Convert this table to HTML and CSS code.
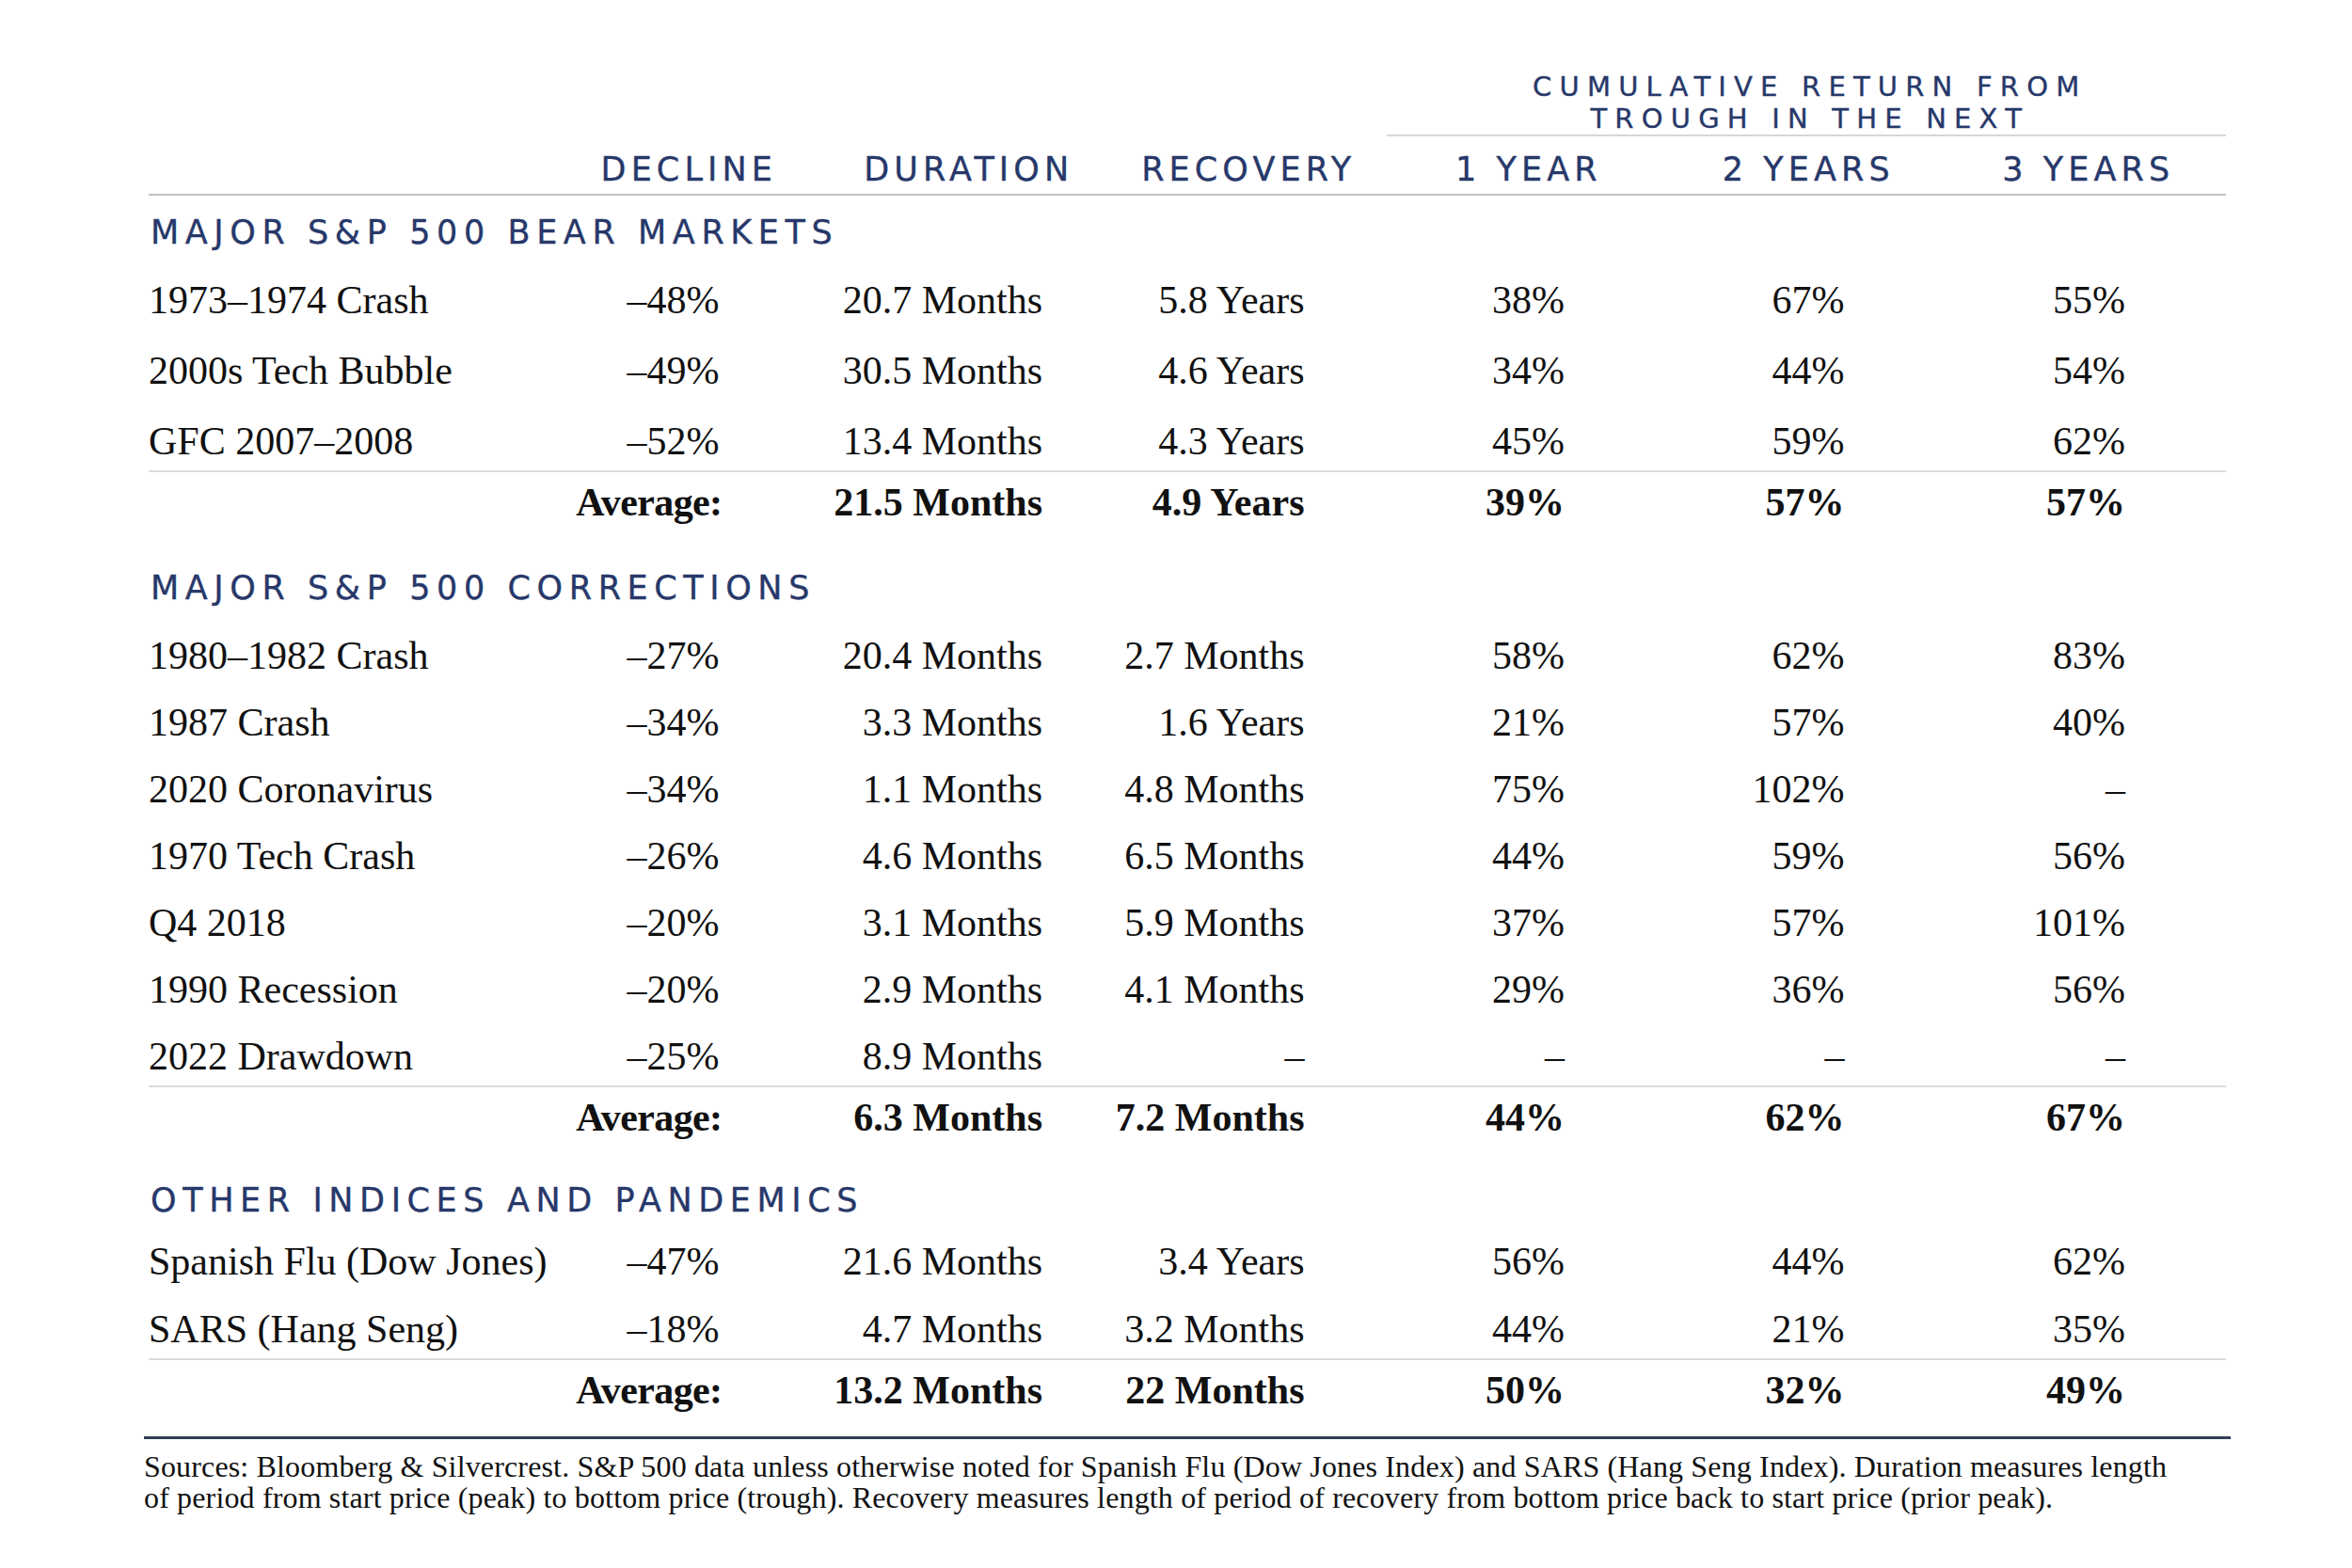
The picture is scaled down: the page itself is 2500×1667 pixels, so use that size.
FILE: index.html
```html
<!DOCTYPE html>
<html lang="en">
<head>
<meta charset="utf-8">
<title>Bear markets and corrections</title>
<link rel="stylesheet" href="styles.css">
</head>
<body>
<main class="page">
  <div class="table">
    <div class="grid head-group">
      <div class="group-label"><span class="gl-line">CUMULATIVE RETURN FROM</span><span class="gl-line">TROUGH IN THE NEXT</span></div>
    </div>
    <div class="grid head-cols">
      <div class="hc hc1">DECLINE</div>
      <div class="hc">DURATION</div>
      <div class="hc">RECOVERY</div>
      <div class="hc">1 YEAR</div>
      <div class="hc">2 YEARS</div>
      <div class="hc">3 YEARS</div>
    </div>

    <section class="block block-bear">
      <h2 class="block-title">MAJOR S&amp;P 500 BEAR MARKETS</h2>
      <div class="rows">
        <div class="grid row"><span class="label">1973–1974 Crash</span><span class="v c1">–48%</span><span class="v c2">20.7 Months</span><span class="v c3">5.8 Years</span><span class="v c4">38%</span><span class="v c5">67%</span><span class="v c6">55%</span></div>
        <div class="grid row"><span class="label">2000s Tech Bubble</span><span class="v c1">–49%</span><span class="v c2">30.5 Months</span><span class="v c3">4.6 Years</span><span class="v c4">34%</span><span class="v c5">44%</span><span class="v c6">54%</span></div>
        <div class="grid row"><span class="label">GFC 2007–2008</span><span class="v c1">–52%</span><span class="v c2">13.4 Months</span><span class="v c3">4.3 Years</span><span class="v c4">45%</span><span class="v c5">59%</span><span class="v c6">62%</span></div>
      </div>
      <div class="grid row avg"><span class="v avg-label">Average:</span><span class="v c2">21.5 Months</span><span class="v c3">4.9 Years</span><span class="v c4">39%</span><span class="v c5">57%</span><span class="v c6">57%</span></div>
    </section>

    <section class="block block-corr">
      <h2 class="block-title">MAJOR S&amp;P 500 CORRECTIONS</h2>
      <div class="rows">
        <div class="grid row"><span class="label">1980–1982 Crash</span><span class="v c1">–27%</span><span class="v c2">20.4 Months</span><span class="v c3">2.7 Months</span><span class="v c4">58%</span><span class="v c5">62%</span><span class="v c6">83%</span></div>
        <div class="grid row"><span class="label">1987 Crash</span><span class="v c1">–34%</span><span class="v c2">3.3 Months</span><span class="v c3">1.6 Years</span><span class="v c4">21%</span><span class="v c5">57%</span><span class="v c6">40%</span></div>
        <div class="grid row"><span class="label">2020 Coronavirus</span><span class="v c1">–34%</span><span class="v c2">1.1 Months</span><span class="v c3">4.8 Months</span><span class="v c4">75%</span><span class="v c5">102%</span><span class="v c6">–</span></div>
        <div class="grid row"><span class="label">1970 Tech Crash</span><span class="v c1">–26%</span><span class="v c2">4.6 Months</span><span class="v c3">6.5 Months</span><span class="v c4">44%</span><span class="v c5">59%</span><span class="v c6">56%</span></div>
        <div class="grid row"><span class="label">Q4 2018</span><span class="v c1">–20%</span><span class="v c2">3.1 Months</span><span class="v c3">5.9 Months</span><span class="v c4">37%</span><span class="v c5">57%</span><span class="v c6">101%</span></div>
        <div class="grid row"><span class="label">1990 Recession</span><span class="v c1">–20%</span><span class="v c2">2.9 Months</span><span class="v c3">4.1 Months</span><span class="v c4">29%</span><span class="v c5">36%</span><span class="v c6">56%</span></div>
        <div class="grid row"><span class="label">2022 Drawdown</span><span class="v c1">–25%</span><span class="v c2">8.9 Months</span><span class="v c3">–</span><span class="v c4">–</span><span class="v c5">–</span><span class="v c6">–</span></div>
      </div>
      <div class="grid row avg"><span class="v avg-label">Average:</span><span class="v c2">6.3 Months</span><span class="v c3">7.2 Months</span><span class="v c4">44%</span><span class="v c5">62%</span><span class="v c6">67%</span></div>
    </section>

    <section class="block block-other">
      <h2 class="block-title">OTHER INDICES AND PANDEMICS</h2>
      <div class="rows">
        <div class="grid row"><span class="label">Spanish Flu (Dow Jones)</span><span class="v c1">–47%</span><span class="v c2">21.6 Months</span><span class="v c3">3.4 Years</span><span class="v c4">56%</span><span class="v c5">44%</span><span class="v c6">62%</span></div>
        <div class="grid row"><span class="label">SARS (Hang Seng)</span><span class="v c1">–18%</span><span class="v c2">4.7 Months</span><span class="v c3">3.2 Months</span><span class="v c4">44%</span><span class="v c5">21%</span><span class="v c6">35%</span></div>
      </div>
      <div class="grid row avg"><span class="v avg-label">Average:</span><span class="v c2">13.2 Months</span><span class="v c3">22 Months</span><span class="v c4">50%</span><span class="v c5">32%</span><span class="v c6">49%</span></div>
    </section>
  </div>

  <p class="notes">Sources: Bloomberg &amp; Silvercrest. S&amp;P 500 data unless otherwise noted for Spanish Flu (Dow Jones Index) and SARS (Hang Seng Index). Duration measures length<br>of period from start price (peak) to bottom price (trough). Recovery measures length of period of recovery from bottom price back to start price (prior peak).</p>
</main>
</body>
</html>
```

FILE: styles.css
```css
* {
  box-sizing: border-box;
  margin: 0;
  padding: 0;
}

body {
  background: #ffffff;
  width: 2500px;
  min-height: 1667px;
  font-family: "Liberation Serif", "Times New Roman", serif;
  color: #111111;
}

.page {
  width: 2371px;
  padding: 75px 0 0 153px;
}

.table {
  width: 2208px;
  margin-left: 5px;
}

.grid {
  display: grid;
  grid-template-columns: 423px repeat(6, 1fr);
}

/* ---------- headers ---------- */
.group-label {
  grid-column: 5 / 8;
  display: flex;
  flex-direction: column;
  align-items: center;
  font-family: "DejaVu Sans", sans-serif;
  font-size: 29px;
  line-height: 34px;
  letter-spacing: 8.2px;
  color: #27386a;
  -webkit-text-stroke: 0.35px #27386a;
  border-bottom: 2px solid #d6d6d6;
}

.gl-line {
  display: block;
  padding-left: 8px;
  white-space: nowrap;
}

.head-cols {
  padding-top: 9px;
  border-bottom: 2px solid #c0c0c0;
}

.hc {
  text-align: center;
  font-family: "DejaVu Sans", sans-serif;
  font-size: 35px;
  line-height: 52px;
  letter-spacing: 5.1px;
  padding-left: 5px;
  color: #27386a;
  -webkit-text-stroke: 0.35px #27386a;
}

.hc1 {
  grid-column: 2;
}

/* ---------- blocks ---------- */
.block-title {
  font-family: "DejaVu Sans", sans-serif;
  font-weight: normal;
  font-size: 35px;
  line-height: 50px;
  letter-spacing: 6.6px;
  color: #27386a;
  -webkit-text-stroke: 0.35px #27386a;
  padding-left: 2px;
}

.block-bear .block-title {
  margin-top: 14px;
}

.block-corr .block-title {
  margin-top: 34px;
}

.block-other .block-title {
  margin-top: 31px;
}

.rows {
  display: flex;
  flex-direction: column;
  margin-top: 16px;
}

.block-bear .rows {
  gap: 13px;
}

.block-corr .rows {
  gap: 9px;
}

.block-other .rows {
  gap: 10px;
  margin-top: 9px;
}

.row {
  font-size: 42px;
  line-height: 62px;
  white-space: nowrap;
}

.label {
  grid-column: 1;
}

.v {
  text-align: right;
}

.c1 { grid-column: 2; padding-right: 114px; }
.c2 { grid-column: 3; padding-right: 68px; }
.c3 { grid-column: 4; padding-right: 87px; }
.c4 { grid-column: 5; padding-right: 108px; }
.c5 { grid-column: 6; padding-right: 108px; }
.c6 { grid-column: 7; padding-right: 107px; }

.avg {
  border-top: 2px solid #dcdcdc;
  line-height: 64px;
  font-weight: bold;
}

.avg-label {
  grid-column: 2;
  padding-right: 111px;
  letter-spacing: -0.6px;
}

/* ---------- notes ---------- */
.notes {
  margin-top: 17px;
  padding-top: 13px;
  border-top: 3px solid #2f3d55;
  font-size: 32px;
  line-height: 33px;
  letter-spacing: 0.15px;
  color: #111111;
  white-space: nowrap;
}
```
